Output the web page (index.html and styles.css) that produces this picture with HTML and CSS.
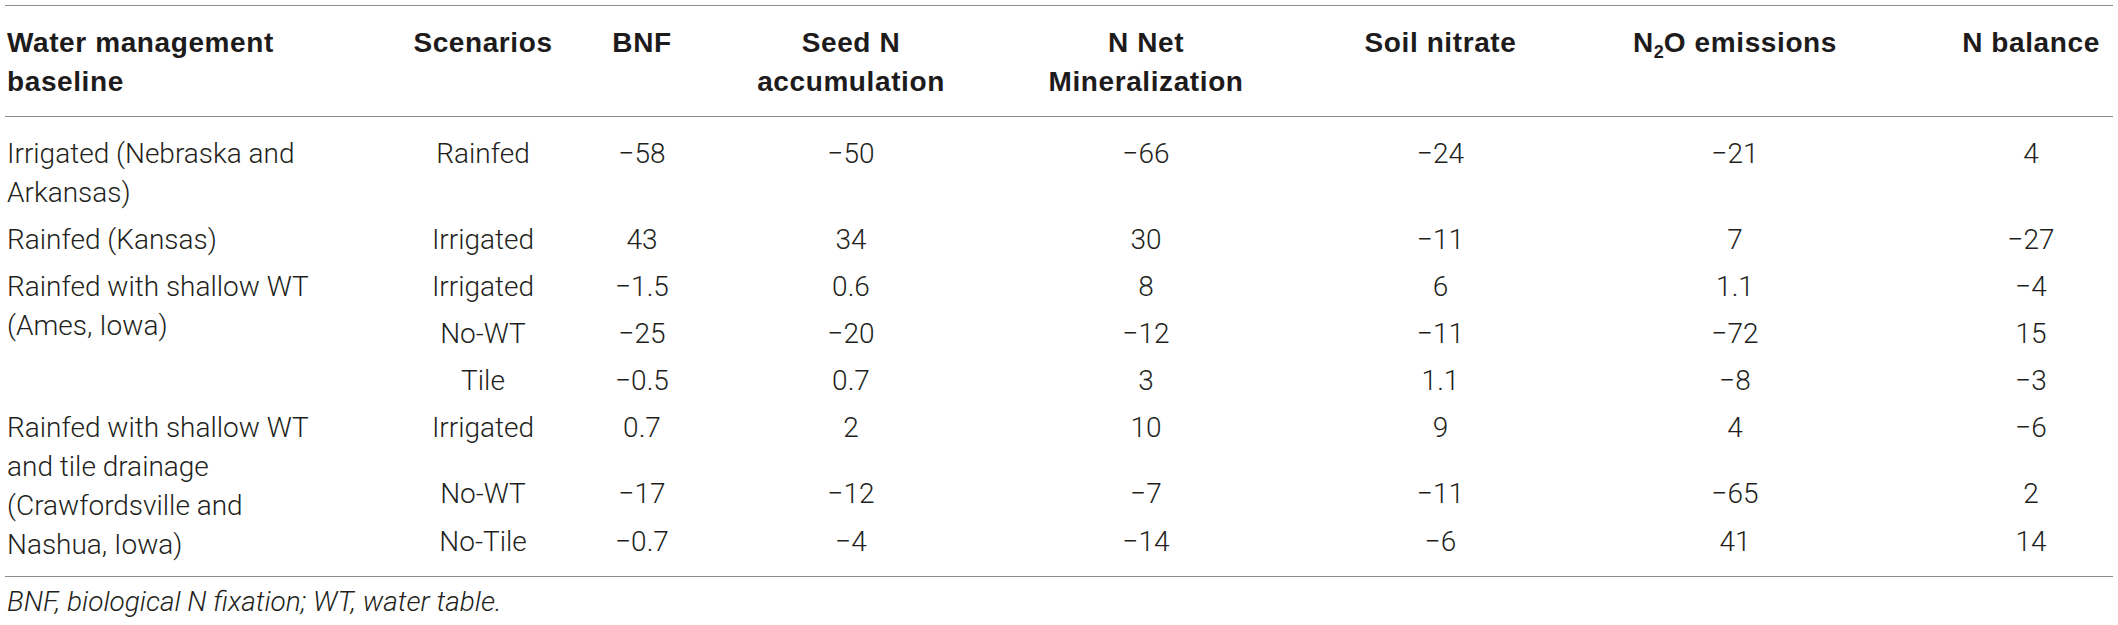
FILE: index.html
```html
<!DOCTYPE html>
<html lang="en">
<head>
<meta charset="utf-8">
<title>Water management scenarios</title>
<link rel="stylesheet" href="styles.css">
</head>
<body>
<div class="page">
  <table class="data">
    <colgroup>
      <col class="w-base">
      <col class="w-scen">
      <col class="w-bnf">
      <col class="w-seed">
      <col class="w-net">
      <col class="w-soil">
      <col class="w-n2o">
      <col class="w-bal">
    </colgroup>
    <thead>
      <tr>
        <th class="c-base">Water management baseline</th>
        <th>Scenarios</th>
        <th>BNF</th>
        <th>Seed N accumulation</th>
        <th class="c-net">N Net Mineralization</th>
        <th>Soil nitrate</th>
        <th>N<sub>2</sub>O emissions</th>
        <th class="c-bal">N balance</th>
      </tr>
    </thead>
    <tbody>
      <tr class="first">
        <td class="c-base">Irrigated (Nebraska and Arkansas)</td>
        <td>Rainfed</td>
        <td>−58</td>
        <td>−50</td>
        <td class="c-net">−66</td>
        <td>−24</td>
        <td>−21</td>
        <td class="c-bal">4</td>
      </tr>
      <tr>
        <td class="c-base">Rainfed (Kansas)</td>
        <td>Irrigated</td>
        <td>43</td>
        <td>34</td>
        <td class="c-net">30</td>
        <td>−11</td>
        <td>7</td>
        <td class="c-bal">−27</td>
      </tr>
      <tr>
        <td class="c-base" rowspan="3">Rainfed with shallow WT (Ames, Iowa)</td>
        <td>Irrigated</td>
        <td>−1.5</td>
        <td>0.6</td>
        <td class="c-net">8</td>
        <td>6</td>
        <td>1.1</td>
        <td class="c-bal">−4</td>
      </tr>
      <tr>
        <td>No-WT</td>
        <td>−25</td>
        <td>−20</td>
        <td class="c-net">−12</td>
        <td>−11</td>
        <td>−72</td>
        <td class="c-bal">15</td>
      </tr>
      <tr>
        <td>Tile</td>
        <td>−0.5</td>
        <td>0.7</td>
        <td class="c-net">3</td>
        <td>1.1</td>
        <td>−8</td>
        <td class="c-bal">−3</td>
      </tr>
      <tr class="tall">
        <td class="c-base" rowspan="3">Rainfed with shallow WT and tile drainage (Crawfordsville and Nashua, Iowa)</td>
        <td>Irrigated</td>
        <td>0.7</td>
        <td>2</td>
        <td class="c-net">10</td>
        <td>9</td>
        <td>4</td>
        <td class="c-bal">−6</td>
      </tr>
      <tr class="mid">
        <td>No-WT</td>
        <td>−17</td>
        <td>−12</td>
        <td class="c-net">−7</td>
        <td>−11</td>
        <td>−65</td>
        <td class="c-bal">2</td>
      </tr>
      <tr class="last">
        <td>No-Tile</td>
        <td>−0.7</td>
        <td>−4</td>
        <td class="c-net">−14</td>
        <td>−6</td>
        <td>41</td>
        <td class="c-bal">14</td>
      </tr>
    </tbody>
  </table>
  <p class="note">BNF, biological N fixation; WT, water table.</p>
</div>
</body>
</html>
```

FILE: styles.css
```css
html, body {
  margin: 0;
  padding: 0;
  background: #ffffff;
}

body {
  font-family: "Roboto", "Liberation Sans", sans-serif;
  font-weight: 300;
  color: #231f20;
}

.page {
  padding: 5px 5px 0 5px;
}

.data {
  border-collapse: separate;
  border-spacing: 0;
  table-layout: fixed;
  width: 2108px;
  border-top: 1px solid #8c8c8c;
  border-bottom: 1px solid #8c8c8c;
  font-size: 28px;
  line-height: 39px;
}

.w-base { width: 395px; }
.w-scen { width: 166px; }
.w-bnf  { width: 152px; }
.w-seed { width: 266px; }
.w-net  { width: 324px; }
.w-soil { width: 265px; }
.w-n2o  { width: 324px; }
.w-bal  { width: 216px; }

.data th {
  font-family: "Liberation Sans", Arial, sans-serif;
  font-weight: 700;
  letter-spacing: 0.6px;
  color: #1e1b1c;
  text-align: center;
  vertical-align: top;
  padding: 17px 0 15px;
  border-bottom: 1px solid #8c8c8c;
}

.data th sub {
  font-size: 18px;
  line-height: 0;
  vertical-align: -6px;
  letter-spacing: 0;
}

.data td {
  text-align: center;
  vertical-align: top;
  padding: 4px 0;
}

.data .first td {
  padding-top: 17px;
}

.data .last td {
  padding-bottom: 15px;
}

.data .tall {
  height: 66px;
}

.data .mid {
  height: 48px;
}

.data .c-base {
  text-align: left;
  padding-left: 2px;
  padding-right: 60px;
}

.data .c-net {
  padding-left: 30px;
  padding-right: 30px;
}

.data .c-bal {
  padding-left: 52px;
  padding-right: 0;
}

.note {
  margin: 5px 0 0 2px;
  font-size: 28px;
  line-height: 39px;
  font-style: italic;
  font-weight: 300;
}
```
